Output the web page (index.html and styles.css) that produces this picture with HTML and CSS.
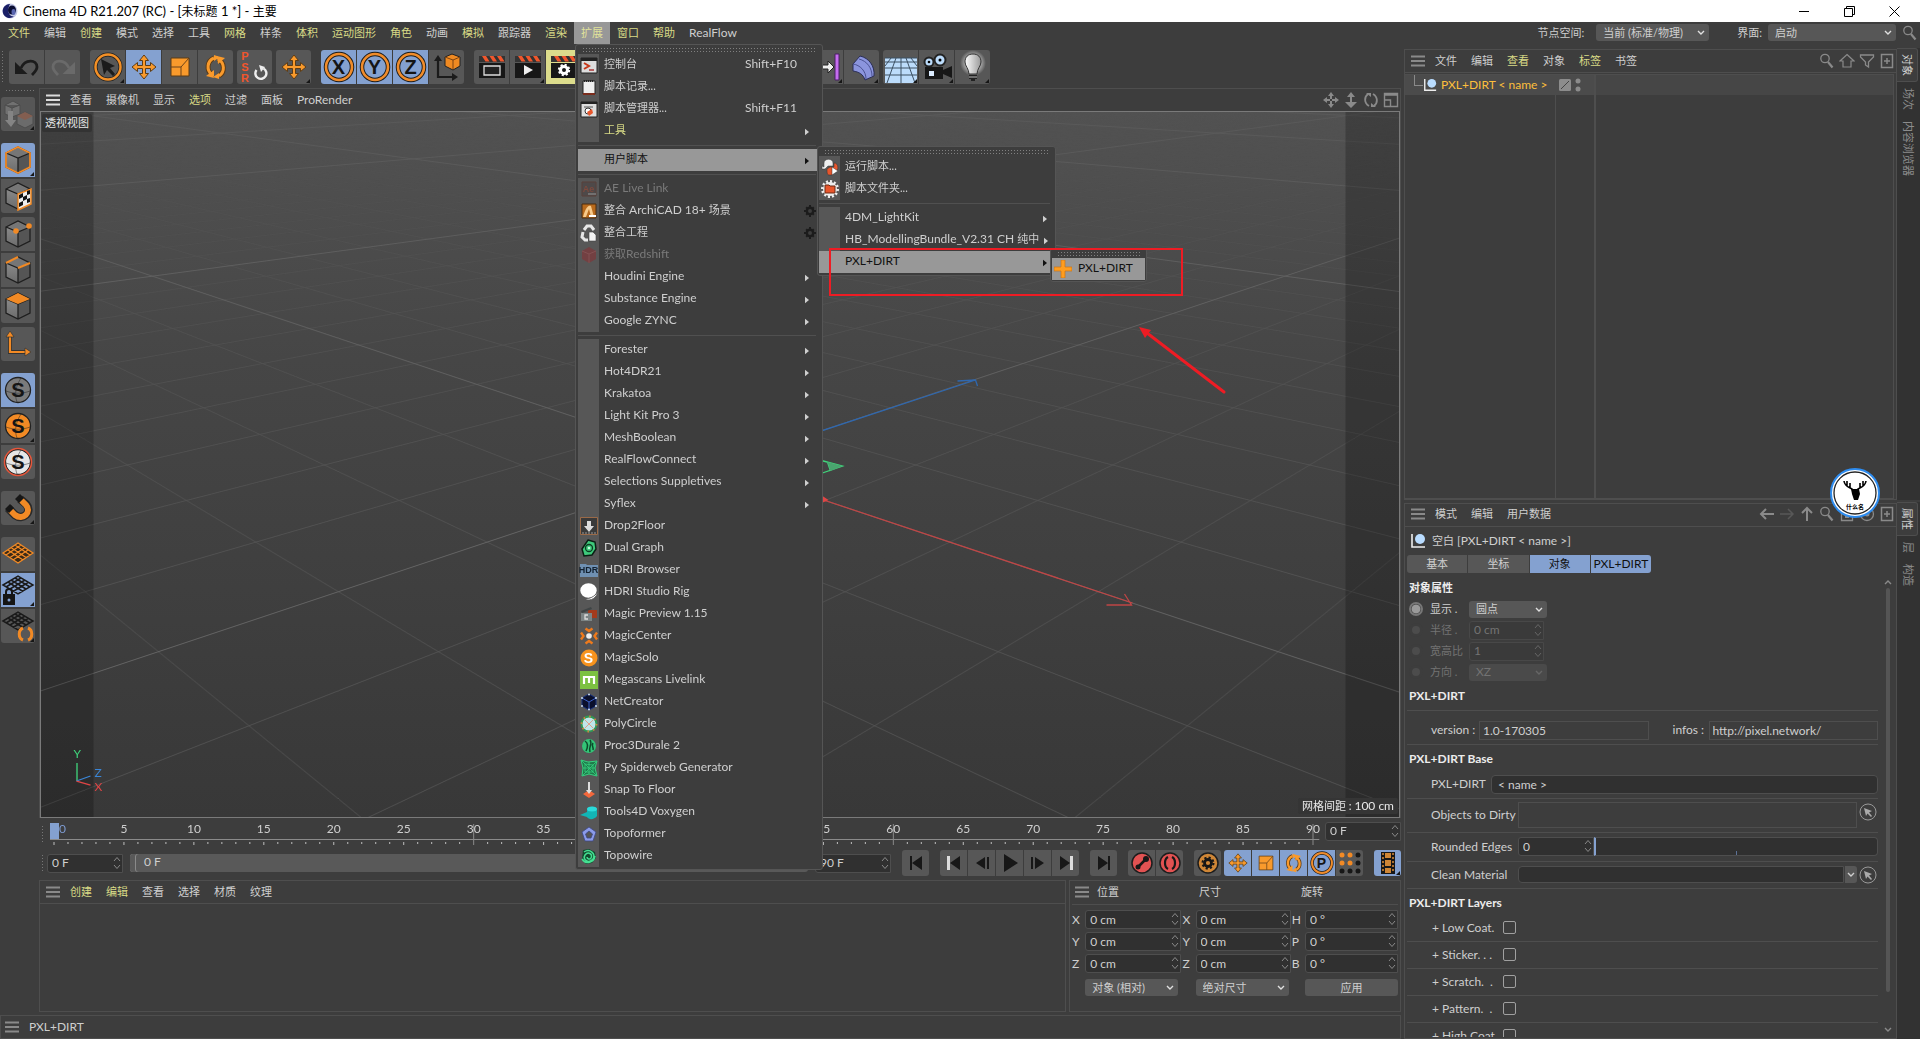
FILE: index.html
```html
<!DOCTYPE html>
<html lang="zh-CN">
<head>
<meta charset="utf-8">
<title>Cinema 4D R21.207 (RC) - [未标题 1 *] - 主要</title>
<link rel="stylesheet" href="styles.css">
</head>
<body>
<svg class="paints" aria-hidden="true">
  <defs>
    <linearGradient id="cubeL" x1="0" y1="0" x2="0" y2="1"><stop offset="0" stop-color="#8a8a8a"/><stop offset="1" stop-color="#6c6c6c"/></linearGradient>
    <radialGradient id="glow"><stop offset="0.5" stop-color="#fff" stop-opacity=".6"/><stop offset="1" stop-color="#fff" stop-opacity="0"/></radialGradient>
    <linearGradient id="bulb"><stop offset="0" stop-color="#fff"/><stop offset="1" stop-color="#999"/></linearGradient>
  </defs>
</svg>
<svg class="sprite" aria-hidden="true">
  <symbol id="logo" viewBox="0 0 16 16"><circle cx="8" cy="8" r="7.500" fill="#c3c8e6"/><path d="M8 1a7 7 0 1 0 4 12.500C6 14 5 6 8 1z" fill="#1a1f66"/><ellipse cx="10" cy="7" rx="4" ry="4.500" fill="#0b0e33"/><ellipse cx="11.500" cy="9" rx="2" ry="3" fill="#5a66b0"/></symbol>
  <symbol id="burger" viewBox="0 0 14 12"><path d="M0 1.500h14M0 6h14M0 10.500h14" stroke="currentColor" stroke-width="2"/></symbol>
  <symbol id="chev" viewBox="0 0 8 6"><path d="M1 1l3 3 3-3" fill="none" stroke="currentColor" stroke-width="1.400"/></symbol>
  <symbol id="spin" viewBox="0 0 8 14"><path d="M1 5l3-3.500L7 5M1 9l3 3.500L7 9" fill="none" stroke="currentColor"/></symbol>
  <symbol id="tri" viewBox="0 0 5 8"><path d="M0 0l5 4-5 4z" fill="currentColor"/></symbol>
  <symbol id="lens" viewBox="0 0 16 16"><circle cx="6" cy="5.500" r="4.200" fill="none" stroke="currentColor" stroke-width="1.300"/><path d="M9 9l4.500 5.500" stroke="currentColor" stroke-width="2.200"/></symbol>
  <symbol id="home" viewBox="0 0 16 16"><path d="M8 1.500L15 8h-3v6H4V8H1z" fill="none" stroke="currentColor" stroke-width="1.200"/></symbol>
  <symbol id="filter" viewBox="0 0 16 16"><path d="M1.500 2h13v2L9.500 9v5l-3-2V9l-5-5z" fill="none" stroke="currentColor" stroke-width="1.300"/></symbol>
  <symbol id="plusbox" viewBox="0 0 16 16"><path d="M2.500 1.500h11v13h-11zM8 5v6M5 8h6" fill="none" stroke="currentColor" stroke-width="1.500"/></symbol>
  <symbol id="lockbox" viewBox="0 0 16 16"><path d="M2.500 5.500h11v9h-11z" fill="none" stroke="currentColor" stroke-width="1.300"/><path d="M6 9h4v3H6z" fill="currentColor"/></symbol>
  <symbol id="target" viewBox="0 0 16 16"><circle cx="8" cy="8" r="6.500" fill="none" stroke="currentColor" stroke-width="1.300"/><circle cx="8" cy="8" r="2.500" fill="currentColor"/></symbol>
  <symbol id="aleft" viewBox="0 0 16 16"><path d="M15 8H2M7 3L2 8l5 5" fill="none" stroke="currentColor" stroke-width="2"/></symbol>
  <symbol id="aright" viewBox="0 0 16 16"><path d="M1 8h13M9 3l5 5-5 5" fill="none" stroke="currentColor" stroke-width="1.500"/></symbol>
  <symbol id="aup" viewBox="0 0 16 16"><path d="M8 15V2M3 7l5-5 5 5" fill="none" stroke="currentColor" stroke-width="2"/></symbol>
  <symbol id="undo" viewBox="0 0 34 34"><path d="M11 18C15 9 27 9 27 17c0 3-2 5-5 8" fill="none" stroke="currentColor" stroke-width="2.800"/><path d="M5 12v12h12.500z" fill="currentColor"/></symbol>
  <symbol id="select" viewBox="0 0 34 34"><circle cx="17" cy="17" r="12.500" fill="none" stroke="#222" stroke-width="4"/><circle cx="17" cy="17" r="12.500" fill="none" stroke="#f39027" stroke-width="2.500"/><path d="M10 9l14 7-5 2 5 6-2 2-6-6-3 5z" fill="#1b1b1b"/></symbol>
  <symbol id="move" viewBox="0 0 34 34"><path d="M17 5l4.500 5.500H18.500v5h5v-3l5.500 4.500-5.500 4.500v-3h-5v5h3L17 29l-4.500-5.500h3v-5h-5v3L5 17l5.500-4.500v3h5v-5h-3z" fill="#f99a2c" stroke="#5c3c17"/></symbol>
  <symbol id="scale" viewBox="0 0 34 34"><path d="M8 8h18v18H8z" fill="#f99a2c" stroke="#5c3c17"/><path d="M8 17h10v9M18 17l8-9" fill="none" stroke="#6b431a"/></symbol>
  <symbol id="rotate" viewBox="0 0 34 34"><path d="M13 25C7 20 8 11 15 8M19 9c7 4 7 13 1 17" fill="none" stroke="#5c3c17" stroke-width="5"/><path d="M13 25C7 20 8 11 15 8M19 9c7 4 7 13 1 17" fill="none" stroke="#f99a2c" stroke-width="3"/><path d="M15 5v6l6-4zM20 23v6l-6-2zM7 26l8 2V20zM26 8l-8-2 1 8z" fill="#f99a2c"/></symbol>
  <symbol id="psr" viewBox="0 0 34 34"><path d="M18.500 20a5.500 5.500 0 1 0 7-1.500" fill="none" stroke="#eee" stroke-width="2.400"/><path d="M21 15l6 2-4 5z" fill="#eee"/></symbol>
  <symbol id="ring" viewBox="0 0 34 34"><circle cx="17" cy="17" r="13" fill="none" stroke="#1d1d1d" stroke-width="4.500"/><circle cx="17" cy="17" r="13" fill="none" stroke="#f08c2b" stroke-width="2.600"/></symbol>
  <symbol id="world" viewBox="0 0 34 34"><path d="M8 10v17h16" fill="none" stroke="#1b1b1b" stroke-width="2.200"/><path d="M8 5l4 6H4zM28 27l-6 4v-8z" fill="#1b1b1b"/><path d="M15 7l7-3 8 3v9l-7 4-8-4z" fill="#f08a22" stroke="#222"/><path d="M15 7l8 3 7-3M23 10v9" fill="none" stroke="#7c4310"/></symbol>
  <symbol id="clap" viewBox="0 0 34 34"><path d="M4 13h26v15H4z" fill="#171717"/><path d="M4 6h26v6H4z" fill="#333"/><path d="M7 6l3.500 5.500h4L11 6zM14.500 6l3.500 5.500h4L18.500 6zM22 6l3.500 5.500h4L26 6z" fill="#f0562c"/></symbol>
  <symbol id="renderview" viewBox="0 0 34 34"><use href="#clap"/><path d="M9 16h16v9H9z" fill="#222" stroke="#ddd" stroke-width="1.300"/></symbol>
  <symbol id="renderpv" viewBox="0 0 34 34"><use href="#clap"/><path d="M13 15l9 5-9 5z" fill="#eee"/></symbol>
  <symbol id="renderset" viewBox="0 0 34 34"><use href="#clap"/><circle cx="17" cy="20" r="3.500" fill="none" stroke="#fff" stroke-width="3"/><circle cx="17" cy="20" r="5.200" fill="none" stroke="#fff" stroke-width="2" stroke-dasharray="2.100 1.980"/></symbol>
  <symbol id="inst" viewBox="0 0 34 34"><path d="M13 15h6v-4l6 6-6 6v-4h-6z" fill="#eee" stroke="#222"/><path d="M26 4h4v26h-4z" fill="#c66df0" stroke="#4b2165"/></symbol>
  <symbol id="bend" viewBox="0 0 34 34"><path d="M8 14l7-8c9 2 15 10 14 20l-9 4c-2-6-6-8-12-9z" fill="#8b95de" stroke="#2b2e55"/><path d="M8 14c7 1 13 7 13 15M14 9c8 2 13 9 13 17" fill="none" stroke="#4a5192"/></symbol>
  <symbol id="floor" viewBox="0 0 34 34"><path d="M1 8h32v25H1z" fill="#bcdcfb"/><path d="M1 8h32M1 12h32M1 18h32M1 25h32M17 8v25M12 8L3 33M22 8l9 25M7 8L1 16M27 8l6 8" fill="none" stroke="#3c5063"/></symbol>
  <symbol id="cam" viewBox="0 0 34 34"><path d="M5 17h18v3l9-4v12l-9-4v5H5z" fill="#171717"/><circle cx="9" cy="12" r="4.500" fill="#bcdcfb" stroke="#222" stroke-width="2"/><circle cx="20" cy="10" r="5.500" fill="#bcdcfb" stroke="#222" stroke-width="2"/><circle cx="9" cy="12" r="1.300"/><circle cx="20" cy="10" r="1.500"/><path d="M9 21h5v5H9z" fill="#dcecff"/></symbol>
  <symbol id="light" viewBox="0 0 34 34"><circle cx="17" cy="13" r="13" fill="url(#glow)"/><path d="M17 4c-5 0-8 3-8 8 0 4 4 7 4 12h8c0-5 4-8 4-12 0-5-3-8-8-8z" fill="url(#bulb)" stroke="#333"/><path d="M13 25h8v4h-8zM15 29h4v2h-4z" fill="#222"/><path d="M13 27h8" stroke="#bbb"/></symbol>
  <symbol id="cube" viewBox="0 0 34 34"><path d="M5 10l12 5v15L5 24z" fill="url(#cubeL)"/><path d="M17 15l12-5v14l-12 6z" fill="#555"/><path d="M5 10l12-6 12 6-12 5z" fill="#767676"/><path d="M5 10l12-6 12 6v14l-12 6-12-6zl12 5 12-5M17 15v15" fill="none" stroke="#1f1f1f" stroke-width="1.300"/></symbol>
  <symbol id="editable" viewBox="0 0 34 34"><g opacity=".55"><path d="M4 8l8-4 7 4v9l-8 3-7-3zl7 3 8-3M11 11v9" fill="#888" stroke="#444"/><path d="M16 19l8-4 8 4v8l-8 4-8-4z" fill="#7d7d7d" stroke="#444"/><path d="M16 19l8-4 8 4-8 4z" fill="#a8644c"/><path d="M7 14h5v9h3l-5 7-6-7h3z" fill="#aaa"/></g></symbol>
  <symbol id="model" viewBox="0 0 34 34"><use href="#cube"/><path d="M5 10l12-6 12 6v14l-12 6-12-6z" fill="none" stroke="#f28a25" stroke-width="1.800"/></symbol>
  <symbol id="texture" viewBox="0 0 34 34"><use href="#cube"/><path d="M17 15l13-5v15l-13 6z" fill="#eee" stroke="#f28a25" stroke-width="1.500"/><path d="M18 16l4-2v4l-4 2zM26 12l3-1v4l-3 1zM22 18l4-2v4l-4 2zM18 24l4-2v4l-4 2zM26 20l3-1v4l-3 1z" fill="#111"/></symbol>
  <symbol id="points" viewBox="0 0 34 34"><use href="#cube"/><circle cx="15" cy="14" r="2.800" fill="#f28a25"/><circle cx="28" cy="9" r="2.800" fill="#f28a25"/></symbol>
  <symbol id="edges" viewBox="0 0 34 34"><use href="#cube"/><path d="M5 10l12-6M17 15l12-5" stroke="#f28a25" stroke-width="2"/></symbol>
  <symbol id="polys" viewBox="0 0 34 34"><use href="#cube"/><path d="M5 10l12-6 12 6-12 5z" fill="#f28a25"/></symbol>
  <symbol id="axis" viewBox="0 0 34 34"><path d="M9 8v17h16" fill="none" stroke="#333" stroke-width="4"/><path d="M9 8v17h16" fill="none" stroke="#f28a25" stroke-width="2.200"/><path d="M9 4l4 6H5zM30 25l-6 4v-8z" fill="#f28a25" stroke="#333" stroke-width=".7"/></symbol>
  <symbol id="snapo" viewBox="0 0 34 34"><circle cx="17" cy="17" r="12.500" fill="currentColor" stroke="#222" stroke-width="1.300"/><path d="M5 18c8 3 16 3 24 0M20 5c-5 8-7 16-4 24" fill="none" stroke="#222" stroke-opacity=".6" stroke-width=".8"/></symbol>
  <symbol id="redring" viewBox="0 0 34 34"><use href="#snapo"/><circle cx="17" cy="17" r="13.500" fill="none" stroke="#e8563a" stroke-width="1.500"/></symbol>
  <symbol id="magnet" viewBox="0 0 34 34"><path d="M7 17l7 7c8 6 18-3 11-11l-6-5" fill="none" stroke="#2a2a2a" stroke-width="8.500"/><path d="M9 19l5 5c8 6 17-3 11-10l-5-5" fill="none" stroke="#f28a25" stroke-width="6"/><path d="M4 18l5-5 4 4-5 5zM14 8l5-5 4 4-5 5z" fill="#171717"/></symbol>
  <symbol id="mesh" viewBox="0 0 34 34"><path d="M2 16L17 6l15 10-15 10z" fill="#3a2a18"/><path d="M2 16L17 6l15 10-15 10zM5 18l15-10M9 20.500l15-10M12 23l15-10M29 18L14 8M25 20.500L10 10.500M22 23L7 13" fill="none" stroke="currentColor" stroke-width="1.300"/></symbol>
  <symbol id="wplock" viewBox="0 0 34 34"><path d="M2 12L17 3l15 9-15 9zM5 14l15-9M9 16l15-9M12 18.500l15-9M29 14L14 5M25 16L10 7M22 18.500L7 9" fill="none" stroke="#1a1a1a" stroke-width="1.500"/><path d="M2 21h12v11H2z" fill="#151515"/><path d="M5 21v-2a3 3 0 0 1 6 0v2" fill="none" stroke="#151515" stroke-width="2"/><circle cx="8" cy="27" r="1.500" fill="#84a1d0"/></symbol>
  <symbol id="wprot" viewBox="0 0 34 34"><path d="M2 12L17 3l15 9-15 9zM5 14l15-9M9 16l15-9M12 18.500l15-9M29 14L14 5M25 16L10 7M22 18.500L7 9" fill="none" stroke="#1a1a1a" stroke-width="1.500"/><path d="M22 19c-5 2-5 10 0 12M27 19c5 2 5 10 0 12" fill="none" stroke="#f28a25" stroke-width="3"/></symbol>
  <symbol id="nav1" viewBox="0 0 16 16"><path d="M8 0l3 4H5zM8 16l3-4H5zM0 8l4-3v6zM16 8l-4-3v6zM7 4h2v3H7zM7 9h2v3H7zM4 7h3v2H4zM9 7h3v2H9z" fill="currentColor"/></symbol>
  <symbol id="nav2" viewBox="0 0 16 16"><path d="M8 0l4 5H9v5h5l-6 6-6-6h5V5H4z" fill="currentColor"/></symbol>
  <symbol id="nav3" viewBox="0 0 16 16"><path d="M6 14C1 11 1 5 5 2M10 2c5 3 5 9 1 12" fill="none" stroke="currentColor" stroke-width="1.800"/><path d="M3 1h5v4zM13 15H8v-4z" fill="currentColor"/></symbol>
  <symbol id="nav4" viewBox="0 0 16 16"><path d="M1.500 1.500h13v13h-13zM1.500 3h13M1.500 8h6v6.500" fill="none" stroke="currentColor" stroke-width="1.400"/></symbol>
  <symbol id="null" viewBox="0 0 16 16"><path d="M2 1v13h13" fill="none" stroke="#eee" stroke-width="1.600"/><circle cx="10" cy="6" r="5" fill="#b9dcff"/></symbol>
  <symbol id="pick" viewBox="0 0 18 18"><circle cx="9" cy="9" r="8" fill="none" stroke="#999"/><path d="M5 5l8 3-3 1.500 3 3.500-1 1-3.500-3.500L7 13z" fill="#aaa"/></symbol>
  <symbol id="pstart" viewBox="0 0 26 26"><path d="M7 6h2v14H7zM19 6v14L9 13z" fill="#171717"/></symbol>
  <symbol id="pkeyb" viewBox="0 0 26 26"><path d="M6 6h3v14H6z" fill="#ddd"/><path d="M19 6v14L9 13z" fill="#171717"/></symbol>
  <symbol id="pback" viewBox="0 0 26 26"><path d="M16 7v12L7 13zM18 7h2v12h-2z" fill="#171717"/></symbol>
  <symbol id="pplay" viewBox="0 0 26 26"><path d="M7 4v18l14-9z" fill="#171717"/></symbol>
  <symbol id="keyrec" viewBox="0 0 26 26"><circle cx="13" cy="13" r="10" fill="#e25252" stroke="#1d1d1d" stroke-width="1.500"/><path d="M9 17l8-8" stroke="#171717" stroke-width="2.500"/><circle cx="9" cy="17" r="2.500" fill="#171717"/><circle cx="17" cy="9" r="3" fill="#171717"/></symbol>
  <symbol id="autorec" viewBox="0 0 26 26"><circle cx="13" cy="13" r="10" fill="#e25252" stroke="#1d1d1d" stroke-width="1.500"/><path d="M11 7c-4 2-4 10 0 12M15 7c4 2 4 10 0 12" fill="none" stroke="#171717" stroke-width="2.200"/></symbol>
  <symbol id="keygear" viewBox="0 0 26 26"><circle cx="13" cy="13" r="10" fill="#cf8636" stroke="#1d1d1d" stroke-width="1.500"/><circle cx="13" cy="13" r="3.500" fill="none" stroke="#171717" stroke-width="2.800"/><circle cx="13" cy="13" r="5.500" fill="none" stroke="#171717" stroke-width="2" stroke-dasharray="2.200 2.100"/></symbol>
  <symbol id="pla" viewBox="0 0 26 26"><g fill="#171717"><circle cx="5" cy="21" r="2.500"/><circle cx="13" cy="21" r="2.500"/><circle cx="21" cy="21" r="2.500"/><circle cx="21" cy="13" r="2.500"/><circle cx="21" cy="5" r="2.500"/></g><g fill="#f28a25"><circle cx="5" cy="5" r="2.500"/><circle cx="13" cy="5" r="2.500"/><circle cx="5" cy="13" r="2.500"/><circle cx="13" cy="13" r="2.500"/></g></symbol>
  <symbol id="film" viewBox="0 0 26 26"><path d="M6 2h14v22H6z" fill="#171717"/><path d="M10 3h6v5h-6zM10 10h6v6h-6zM10 18h6v5h-6z" fill="#cf8636"/><path d="M8 3v20M18 3v20" stroke="#cf8636" stroke-width="1.600" stroke-dasharray="2 2"/></symbol>
  <symbol id="gear" viewBox="0 0 12 12"><circle cx="6" cy="6" r="3.200" fill="none" stroke="#1c1c1c" stroke-width="2.400"/><path d="M5 0h2v2H5zM5 10h2v2H5zM0 5h2v2H0zM10 5h2v2h-2zM1.500 2.900l1.400-1.400 1.500 1.500L3 4.400zM7.600 3l1.500-1.500 1.400 1.400L9 4.400zM1.500 9.100L3 7.600l1.400 1.400-1.500 1.500zM7.600 9L9 7.600l1.500 1.500-1.400 1.400z" fill="#1c1c1c"/></symbol>
  <symbol id="m-console" viewBox="0 0 18 18"><path d="M1 2h16v15H1z" fill="#ddd" stroke="#222"/><path d="M1 2h16v3H1z" fill="#222"/><path d="M4 7l5 3-5 3" fill="none" stroke="#c8381a" stroke-width="2"/><path d="M9 14h5" stroke="#a33" stroke-width="1.500"/></symbol>
  <symbol id="m-log" viewBox="0 0 18 18"><path d="M3 3h12v13H3z" fill="#eee" stroke="#222"/><path d="M3 16h12" stroke="#7a2c1c" stroke-width="2"/><path d="M4 3h10" stroke="#222" stroke-width="2" stroke-dasharray="1 1"/></symbol>
  <symbol id="m-mgr" viewBox="0 0 18 18"><path d="M1 2h16v15H1z" fill="#ddd" stroke="#222"/><path d="M1 2h16v2H1z" fill="#222"/><path d="M4 7h9" stroke="#555"/><circle cx="8" cy="11" r="3" fill="#fff" stroke="#333"/><path d="M7 12l5-3 1 4-4 3z" fill="#e8562c"/></symbol>
  <symbol id="m-ae" viewBox="0 0 18 18"><path d="M2 2h14v14H2z" fill="#4c4646" stroke="#5b3a33"/><path d="M8 14h8" stroke="#888" stroke-width="1.500"/></symbol>
  <symbol id="m-archi" viewBox="0 0 18 18"><path d="M2 2h14v14H2z" fill="#b86a1c" stroke="#4a2c10"/><path d="M3 15C6 4 9 3 11 4l3 11h-3L9 7 6 15z" fill="#f6c98a"/><path d="M9 14h7" stroke="#fff" stroke-width="2"/></symbol>
  <symbol id="m-pack" viewBox="0 0 18 18"><path d="M4 6l3-4h4l3 4M3 8l-1 5 3 3h3" fill="none" stroke="#e6e6e6" stroke-width="3"/><path d="M9 8h4l3 3v6H9z" fill="#f4f4f4" stroke="#444" stroke-width=".6"/></symbol>
  <symbol id="m-red" viewBox="0 0 18 18"><path d="M2 5l7-4 7 4v8l-7 4-7-4z" fill="#7a3b3d"/><path d="M2 5l7 3 7-3M9 8v9" stroke="#8f5052" fill="none"/></symbol>
  <symbol id="m-drop" viewBox="0 0 18 18"><path d="M.5.500h17v17H.5z" fill="#3a3a3a" stroke="#9a6a48"/><path d="M7 4h4v5h3l-5 6-5-6h3z" fill="#ddd"/><path d="M2 16h14" stroke="#999" stroke-dasharray="2 1"/></symbol>
  <symbol id="m-dual" viewBox="0 0 18 18"><path d="M8 1l7 2 1 7-4 6-8 1-2-7z" fill="#3ec97b" stroke="#0b1f14" stroke-width="1.500"/><circle cx="9" cy="9" r="3.500" fill="none" stroke="#0b3d22" stroke-width="1.300"/><circle cx="9" cy="9" r="1.300" fill="#bfffd9"/></symbol>
  <symbol id="m-hdr" viewBox="0 0 18 18"><path d="M0 3h6l1 1h11v12H0z" fill="#6f90b2"/></symbol>
  <symbol id="m-rig" viewBox="0 0 18 18"><ellipse cx="8.500" cy="7.500" rx="8.200" ry="7.300" fill="#fff"/><path d="M5 16.500c6 2 12-2 12.500-7.500-3 5-8 6.500-12.500 7.500z" fill="#fff" stroke="#555" stroke-width=".8"/></symbol>
  <symbol id="m-prev" viewBox="0 0 18 18"><path d="M8 5h9v8H8z" fill="#a33a1c"/><path d="M1 8h11v8H1z" fill="#7d8586"/><path d="M1 6l10-4 1 2L2 8z" fill="#3f4445"/><path d="M8 10H5v4h3" stroke="#ddd" fill="none" stroke-width="1.300"/></symbol>
  <symbol id="m-center" viewBox="0 0 18 18"><circle cx="9" cy="9" r="2.800" fill="#eee"/><path d="M5.500 1.500L9 4l3.500-2.500M5.500 16.500L9 14l3.500 2.500M1 5.500L3.500 9 1 12.500M17 5.500L14.500 9l2.500 3.500" fill="none" stroke="#ee7a1c" stroke-width="2.400"/></symbol>
  <symbol id="m-solo" viewBox="0 0 18 18"><circle cx="9" cy="9" r="8.500" fill="#f7931e"/></symbol>
  <symbol id="m-mega" viewBox="0 0 18 18"><path d="M0 0h18v18H0z" fill="#7cc142"/><path d="M4 13V6h10v7M9 6v6" fill="none" stroke="#fff" stroke-width="2.200"/></symbol>
  <symbol id="m-net" viewBox="0 0 18 18"><path d="M9 1l7 4v8l-7 4-7-4V5z" fill="#0a0f2b" stroke="#16307c"/><path d="M2 5l7 4 7-4M9 9v8" stroke="#3d62cc" fill="none"/><g fill="#cde"><circle cx="9" cy="1.500" r="1"/><circle cx="16" cy="5" r="1"/><circle cx="16" cy="13" r="1"/><circle cx="2" cy="5" r="1"/><circle cx="2" cy="13" r="1"/><circle cx="9" cy="16.500" r="1"/></g></symbol>
  <symbol id="m-poly" viewBox="0 0 18 18"><circle cx="9" cy="9" r="7" fill="#bfe6ea"/><circle cx="9" cy="9" r="7.500" fill="none" stroke="#2f9a54" stroke-width="1.800"/><circle cx="9" cy="9" r="7.500" fill="none" stroke="#d8803c" stroke-width="1.800" stroke-dasharray="1.500 4.390"/><path d="M5 5l8 8M13 5l-8 8" stroke="#e0a08c"/></symbol>
  <symbol id="m-proc" viewBox="0 0 18 18"><circle cx="9" cy="9" r="7" fill="#33c477"/><path d="M5 4c3 2 3 6 1 10M10 3c3 4-2 7 0 12M13 6c-2 3 1 4 0 7" stroke="#0c4a2a" stroke-width="1.500" fill="none"/></symbol>
  <symbol id="m-web" viewBox="0 0 18 18"><path d="M1 1l7 2 9-1-2 7 2 8-8-2-7 2 1-8z" fill="#1f7a4b" stroke="#35d07f"/><path d="M2 2l14 14M16 3L3 16M9 3v12M3 9h12M5 5l8 1 0 7-8 0z" stroke="#35d07f" fill="none" stroke-width=".8"/></symbol>
  <symbol id="m-snap" viewBox="0 0 18 18"><path d="M3 13l6-4 6 4-6 4z" fill="#f4683c"/><path d="M8 1h2v8h2l-3 4-3-4h2z" fill="#ddd"/></symbol>
  <symbol id="m-vox" viewBox="0 0 18 18"><path d="M0 12l7-3V6c3-3 8-3 10 0v7c-3 4-8 4-10 1z" fill="#12b5b5"/><ellipse cx="12" cy="6" rx="5" ry="2.500" fill="#2bdada"/></symbol>
  <symbol id="m-form" viewBox="0 0 18 18"><path d="M9 2l7 5-3 9H5L2 7z" fill="#8b9be8" stroke="#3d4884" stroke-width=".8"/><path d="M9 6l3.500 3-1.500 4H7L5.500 9z" fill="#555" stroke="#3d4884" stroke-width=".8"/></symbol>
  <symbol id="m-wire" viewBox="0 0 18 18"><path d="M3 3l6-1 6 3 1 6-4 5-6 1-4-5z" fill="#124a2d"/><path d="M4 5c6-4 12 2 9 7-4 5-11 1-8-4 3-4 8-1 6 3-1 2-4 1-4-1M2 12c4 6 12 4 13-3" stroke="#44e092" stroke-width="1.500" fill="none"/></symbol>
  <symbol id="m-run" viewBox="0 0 18 18"><path d="M3 9V5c0-5 9-5 9 0v3H7l-3 3H1V8z" fill="#eee" stroke="#333" stroke-width=".5"/><path d="M6 11l3-2h4V5c5 0 5 8 1 9l-3 3H8c-2 0-2-3-2-6z" fill="#e8562c" stroke="#333" stroke-width=".5"/><path d="M11 9l6 4-6 4z" fill="#fff" stroke="#333" stroke-width=".5"/></symbol>
  <symbol id="m-folder" viewBox="0 0 18 18"><circle cx="9" cy="9" r="7" fill="#eee"/><circle cx="9" cy="9" r="7.500" fill="none" stroke="#eee" stroke-width="3" stroke-dasharray="2 1.900"/><path d="M4 5h4l1 1h5v7H4z" fill="#e8562c" stroke="#6a2a14"/></symbol>
  <symbol id="m-plus" viewBox="0 0 18 18"><path d="M7 0h4v7h7v4h-7v7H7v-7H0V7h7z" fill="#ff9d1e" stroke="#c87414" stroke-width=".7"/></symbol>
</svg>

<header class="titlebar">
  <svg class="i16"><use href="#logo"/></svg>
  <span class="title">Cinema 4D R21.207 (RC) - [<span class="t12">未标题</span> 1 *] - <span class="t12">主要</span></span>
  <span class="winbtns">
    <button aria-label="最小化"><svg class="i11" viewBox="0 0 11 11"><path d="M0 5.500h10" stroke="#000"/></svg></button>
    <button aria-label="还原"><svg class="i11" viewBox="0 0 11 11"><path d="M.5 2.500h8v8h-8zM2.500 2.500v-2h8v8h-2" fill="none" stroke="#000"/></svg></button>
    <button aria-label="关闭"><svg class="i11" viewBox="0 0 11 11"><path d="M.5.500l10 10M10.500.500l-10 10" stroke="#000"/></svg></button>
  </span>
</header>

<nav class="menubar">
  <button class="y">文件</button><button>编辑</button><button class="y">创建</button><button>模式</button><button>选择</button><button>工具</button><button class="y">网格</button><button>样条</button><button class="y">体积</button><button class="y">运动图形</button><button class="y">角色</button><button>动画</button><button class="y">模拟</button><button>跟踪器</button><button class="y">渲染</button><button class="y open">扩展</button><button class="y">窗口</button><button class="y">帮助</button><button class="lat">RealFlow</button>
  <span class="layouts">
    <label for="space">节点空间:</label>
    <span class="sel w113"><select id="space"><option>当前 (标准/物理)</option></select><svg><use href="#chev"/></svg></span>
    <label for="layout" class="gapl">界面:</label>
    <span class="sel w128"><select id="layout"><option>启动</option></select><svg><use href="#chev"/></svg></span>
    <svg class="i16 dim"><use href="#lens"/></svg>
  </span>
</nav>

<main class="app">
<div class="left">
  <div class="toolbar">
    <i class="vgrip"></i>
    <div class="grp"><button aria-label="撤销" class="ink"><svg><use href="#undo"/></svg></button><button aria-label="重做" class="ghost"><svg class="flip"><use href="#undo"/></svg></button></div>
    <div class="grp g10"><button aria-label="选择" class="more"><svg><use href="#select"/></svg></button><button aria-label="移动" class="on"><svg><use href="#move"/></svg></button><button aria-label="缩放"><svg><use href="#scale"/></svg></button><button aria-label="旋转"><svg><use href="#rotate"/></svg></button></div>
    <div class="grp g4"><button class="psrb"><svg><use href="#psr"/></svg><span><b>P</b><b>S</b><b>R</b></span></button></div>
    <div class="grp g4"><button aria-label="移动工具" class="more"><svg><use href="#move"/></svg></button></div>
    <div class="grp g10"><button class="on axisb"><svg><use href="#ring"/></svg><b>X</b></button><button class="on axisb"><svg><use href="#ring"/></svg><b>Y</b></button><button class="on axisb"><svg><use href="#ring"/></svg><b>Z</b></button><button aria-label="坐标系统"><svg><use href="#world"/></svg></button></div>
    <div class="grp g10"><button aria-label="渲染活动视图"><svg><use href="#renderview"/></svg></button><button aria-label="渲染到图片查看器" class="more"><svg><use href="#renderpv"/></svg></button><button aria-label="编辑渲染设置" class="hot"><svg><use href="#renderset"/></svg></button></div>
    <div class="grp gbig"><button aria-label="实例" class="more"><svg><use href="#inst"/></svg></button><button aria-label="弯曲" class="more"><svg><use href="#bend"/></svg></button></div>
    <div class="grp g4"><button aria-label="地面" class="more"><svg><use href="#floor"/></svg></button><button aria-label="摄像机" class="more"><svg><use href="#cam"/></svg></button><button aria-label="灯光" class="more"><svg><use href="#light"/></svg></button></div>
  </div>
  <div class="work">
    <aside class="tools">
      <i class="hgrip"></i>
      <div class="col"><button aria-label="转为可编辑" class="more"><svg><use href="#editable"/></svg></button></div>
      <div class="col c12"><button aria-label="模型" class="on more"><svg><use href="#model"/></svg></button><button aria-label="纹理"><svg><use href="#texture"/></svg></button></div>
      <div class="col c4"><button aria-label="点"><svg><use href="#points"/></svg></button><button aria-label="边"><svg><use href="#edges"/></svg></button><button aria-label="多边形"><svg><use href="#polys"/></svg></button></div>
      <div class="col c4"><button aria-label="启用轴心"><svg><use href="#axis"/></svg></button></div>
      <div class="col c12"><button class="on s1 axisb"><svg><use href="#snapo"/></svg><b>S</b></button><button class="s2 more axisb"><svg><use href="#snapo"/></svg><b>S</b></button><button class="s3 axisb"><svg><use href="#redring"/></svg><b>S</b></button></div>
      <div class="col c12"><button aria-label="捕捉" class="more"><svg><use href="#magnet"/></svg></button></div>
      <div class="col c12"><button aria-label="工作平面" class="s2"><svg><use href="#mesh"/></svg></button><button aria-label="锁定工作平面" class="on more"><svg><use href="#wplock"/></svg></button><button aria-label="旋转工作平面" class="more"><svg><use href="#wprot"/></svg></button></div>
    </aside>
    <div class="center">
      <section class="view">
        <div class="phead vhead"><svg class="burger lit"><use href="#burger"/></svg><button>查看</button><button>摄像机</button><button>显示</button><button class="y">选项</button><button>过滤</button><button>面板</button><button class="lat">ProRender</button>
          <span class="icons"><svg class="i16"><use href="#nav1"/></svg><svg class="i16"><use href="#nav2"/></svg><svg class="i16"><use href="#nav3"/></svg><svg class="i16"><use href="#nav4"/></svg></span></div>
        <div class="canvas">
          <svg id="scene" viewBox="41 112 1359 705" preserveAspectRatio="xMidYMid slice">
            <defs><linearGradient id="fade" x1="0" y1="112" x2="0" y2="817" gradientUnits="userSpaceOnUse"><stop offset="0" stop-color="#666"/><stop offset=".25" stop-color="#ddd"/><stop offset=".6" stop-color="#fff"/></linearGradient><mask id="far"><path d="M41 112h1359v705H41z" fill="url(#fade)"/></mask></defs>
            <g mask="url(#far)"><g id="minor"></g><g id="major"></g></g>
            <g fill="none" stroke-width="1.300">
              <path d="M719 465l257-85M958 381l18-1 2 6" stroke="#2f68b0"/>
              <path d="M719 465l414 138M1107 605h25l-7-11" stroke="#c04545"/>
              <path d="M820 494l9 6-9 4z" fill="#e04545"/>
              <path d="M820 460l23 6-23 8M828 462l3 9" stroke="#3fd67c"/>
              <path d="M828 462l15 4-12 5z" fill="#4aa56f"/>
            </g>
            <path d="M41 112h53v705H41zM1346 112h54v705h-54z" fill="#000" opacity=".22"/>
            <g fill="none" stroke-width="1.300"><path d="M77.500 781v-18" stroke="#3fd67c"/><path d="M77 781l14-5" stroke="#3a86d8"/><path d="M77 781l14 4" stroke="#e04545"/></g>
            <g font-family="Lato, sans-serif" font-size="12"><text x="74" y="758" fill="#3fd67c">Y</text><text x="95" y="777" fill="#3a86d8">Z</text><text x="95" y="791" fill="#e04545">X</text></g>
          </svg>
          <span class="vlabel">透视视图</span>
          <span class="vgrid">网格间距 : <span class="lat">100 cm</span></span>
        </div>
      </section>

      <div class="timeline">
        <i class="vgrip small"></i>
        <div class="ruler"><i class="head"></i><svg id="ticks"></svg><div class="nums" id="nums"></div></div>
        <span class="num w76"><input aria-label="当前帧" value="0 F"><svg><use href="#spin"/></svg></span>
      </div>
      <div class="transport">
        <i class="vgrip small"></i>
        <span class="num w76"><input aria-label="起始帧" value="0 F"><svg><use href="#spin"/></svg></span>
        <div class="range">0 F</div>
        <span class="num w76"><input aria-label="结束帧" value="90 F"><svg><use href="#spin"/></svg></span>
        <div class="pg first"><button aria-label="转到开始"><svg><use href="#pstart"/></svg></button></div>
        <div class="pg p12"><button aria-label="上一关键帧"><svg><use href="#pkeyb"/></svg></button><button aria-label="上一帧"><svg><use href="#pback"/></svg></button><button aria-label="播放"><svg><use href="#pplay"/></svg></button><button aria-label="下一帧"><svg class="flip"><use href="#pback"/></svg></button><button aria-label="下一关键帧"><svg class="flip"><use href="#pkeyb"/></svg></button></div>
        <div class="pg p12"><button aria-label="转到结束"><svg class="flip"><use href="#pstart"/></svg></button></div>
        <div class="pg p12"><button aria-label="记录"><svg><use href="#keyrec"/></svg></button><button aria-label="自动关键帧"><svg><use href="#autorec"/></svg></button></div>
        <div class="pg p12"><button aria-label="关键帧选集"><svg><use href="#keygear"/></svg></button></div>
        <div class="pg p4"><button aria-label="位置" class="on"><svg><use href="#move"/></svg></button><button aria-label="缩放" class="on"><svg><use href="#scale"/></svg></button><button aria-label="旋转" class="on"><svg><use href="#rotate"/></svg></button><button class="on axisb"><svg><use href="#ring"/></svg><b>P</b></button><button aria-label="PLA"><svg><use href="#pla"/></svg></button></div>
        <div class="pg p12"><button aria-label="时间线" class="on more"><svg><use href="#film"/></svg></button></div>
      </div>

      <div class="bottom">
        <section class="materials">
          <div class="phead"><svg class="burger"><use href="#burger"/></svg><button class="y">创建</button><button class="y">编辑</button><button>查看</button><button>选择</button><button>材质</button><button>纹理</button></div>
        </section>
        <section class="coords">
          <div class="chead"><svg class="burger"><use href="#burger"/></svg><span>位置</span><span>尺寸</span><span>旋转</span></div>
          <div class="cgrid">
            <label for="px">X</label><span class="num"><input id="px" value="0 cm"><svg><use href="#spin"/></svg></span><label for="sx">X</label><span class="num"><input id="sx" value="0 cm"><svg><use href="#spin"/></svg></span><label for="rh">H</label><span class="num"><input id="rh" value="0 °"><svg><use href="#spin"/></svg></span>
            <label for="py">Y</label><span class="num"><input id="py" value="0 cm"><svg><use href="#spin"/></svg></span><label for="sy">Y</label><span class="num"><input id="sy" value="0 cm"><svg><use href="#spin"/></svg></span><label for="rp">P</label><span class="num"><input id="rp" value="0 °"><svg><use href="#spin"/></svg></span>
            <label for="pz">Z</label><span class="num"><input id="pz" value="0 cm"><svg><use href="#spin"/></svg></span><label for="sz">Z</label><span class="num"><input id="sz" value="0 cm"><svg><use href="#spin"/></svg></span><label for="rb">B</label><span class="num"><input id="rb" value="0 °"><svg><use href="#spin"/></svg></span>
            <i></i><span class="sel"><select aria-label="位置模式"><option>对象 (相对)</option></select><svg><use href="#chev"/></svg></span><i></i><span class="sel"><select aria-label="尺寸模式"><option>绝对尺寸</option></select><svg><use href="#chev"/></svg></span><i></i><button class="apply">应用</button>
          </div>
        </section>
      </div>
    </div>
  </div>
  <footer class="status"><svg class="burger"><use href="#burger"/></svg><span>PXL+DIRT</span></footer>
</div>

<div class="right">
  <div class="dock objects">
    <section class="panel">
      <div class="phead"><svg class="burger"><use href="#burger"/></svg><button>文件</button><button>编辑</button><button class="y">查看</button><button>对象</button><button class="y">标签</button><button>书签</button>
        <span class="icons"><svg class="i16"><use href="#lens"/></svg><svg class="i16"><use href="#home"/></svg><svg class="i16"><use href="#filter"/></svg><svg class="i16"><use href="#plusbox"/></svg></span></div>
      <div class="tree">
        <div class="tcol names"><div class="trow"><i class="branch"></i><svg class="i14"><use href="#null"/></svg><span>PXL+DIRT &lt; name &gt;</span></div></div>
        <div class="tcol flags"><div class="trow"><svg class="i26" viewBox="0 0 26 14"><rect x="1" y="1" width="12" height="12" rx="1.500" fill="#8c8c8c"/><path d="M3 11l8-8" stroke="#444"/><circle cx="20" cy="3" r="2.500" fill="#8c8c8c"/><circle cx="20" cy="11" r="2.500" fill="#8c8c8c"/></svg></div></div>
        <div class="tcol tags"><div class="trow"></div></div>
      </div>
    </section>
    <div class="tabs"><button class="act">对象</button><button>场次</button><button>内容浏览器</button></div>
  </div>
  <div class="dock attrs">
    <section class="panel">
      <div class="phead"><svg class="burger"><use href="#burger"/></svg><button>模式</button><button>编辑</button><button>用户数据</button>
        <span class="icons"><svg class="i16"><use href="#aleft"/></svg><svg class="i16 faint"><use href="#aright"/></svg><svg class="i16"><use href="#aup"/></svg><svg class="i16"><use href="#lens"/></svg><svg class="i16"><use href="#lockbox"/></svg><svg class="i16"><use href="#target"/></svg><svg class="i16"><use href="#plusbox"/></svg></span></div>
      <div class="aname"><svg class="i16"><use href="#null"/></svg><span><span class="zh">空白</span> [PXL+DIRT &lt; name &gt;]</span></div>
      <div class="atabs"><button>基本</button><button>坐标</button><button class="on">对象</button><button class="on lat">PXL+DIRT</button></div>
      <div class="ascroll">
        <form class="aform">
          <h2 class="zh">对象属性</h2>
          <div class="prop"><input type="radio" id="k1" checked aria-label="显示关键帧"><label for="disp">显示 .</label><span class="sel w78"><select id="disp"><option>圆点</option></select><svg><use href="#chev"/></svg></span></div>
          <div class="prop off"><input type="radio" disabled aria-label="半径关键帧"><label for="rad">半径 .</label><span class="num w75"><input id="rad" value="0 cm" disabled><svg><use href="#spin"/></svg></span></div>
          <div class="prop off"><input type="radio" disabled aria-label="宽高比关键帧"><label for="asp">宽高比</label><span class="num w75"><input id="asp" value="1" disabled><svg><use href="#spin"/></svg></span></div>
          <div class="prop off"><input type="radio" disabled aria-label="方向关键帧"><label for="ori">方向 .</label><span class="sel w78"><select id="ori" class="lat" disabled><option>XZ</option></select><svg><use href="#chev"/></svg></span></div>
          <h2>PXL+DIRT</h2>
          <div class="row info"><label for="ver">version :</label><input class="flat" id="ver" value="1.0-170305"><label for="inf">infos :</label><input class="flat" id="inf" value="http://pixel.network/"></div>
          <h2 class="base">PXL+DIRT Base</h2>
          <div class="row r28"><label for="nm" class="l62">PXL+DIRT</label><input class="deep" id="nm" value="&lt; name &gt;"></div>
          <div class="row r34"><label for="obj" class="l88">Objects to Dirty</label><input class="flat tall" id="obj"><button type="button" class="pick" aria-label="拾取对象"><svg><use href="#pick"/></svg></button></div>
          <div class="row r29"><label for="rnd" class="l88">Rounded Edges</label><span class="num slid"><input id="rnd" value="0"><svg><use href="#spin"/></svg></span><i class="track"></i></div>
          <div class="row r27"><label for="mat" class="l88">Clean Material</label><span class="link"><input class="deep" id="mat"><button type="button" aria-label="选择材质"><svg><use href="#chev"/></svg></button></span><button type="button" class="pick" aria-label="拾取材质"><svg><use href="#pick"/></svg></button></div>
          <h2 class="lay">PXL+DIRT Layers</h2>
          <div class="row lr"><label for="c1">+ Low Coat.</label><input type="checkbox" id="c1"></div>
          <div class="row lr"><label for="c2">+ Sticker. . .</label><input type="checkbox" id="c2"></div>
          <div class="row lr"><label for="c3">+ Scratch. &nbsp;.</label><input type="checkbox" id="c3"></div>
          <div class="row lr"><label for="c4">+ Pattern. &nbsp;.</label><input type="checkbox" id="c4"></div>
          <div class="row lr"><label for="c5">+ High Coat</label><input type="checkbox" id="c5"></div>
        </form>
        <div class="sbar"><svg class="up"><use href="#chev"/></svg><i></i><svg><use href="#chev"/></svg></div>
      </div>
    </section>
    <div class="tabs"><button class="act">属性</button><button>层</button><button>构造</button></div>
  </div>
</div>
</main>

<div class="menu m1">
  <i class="dots"></i>
  <div class="mi"><span class="ic"><svg><use href="#m-console"/></svg></span><span class="zh">控制台</span><kbd>Shift+F10</kbd></div>
  <div class="mi"><span class="ic"><svg><use href="#m-log"/></svg></span><span class="zh">脚本记录...</span></div>
  <div class="mi"><span class="ic"><svg><use href="#m-mgr"/></svg></span><span class="zh">脚本管理器...</span><kbd>Shift+F11</kbd></div>
  <div class="mi sub"><span class="ic"></span><span class="zh y">工具</span><svg class="ar"><use href="#tri"/></svg></div>
  <hr>
  <div class="mi sub sel-on"><span class="ic"></span><span class="zh">用户脚本</span><svg class="ar"><use href="#tri"/></svg></div>
  <hr>
  <div class="mi dis"><span class="ic ae"><svg><use href="#m-ae"/></svg><b>Ae</b></span><span>AE Live Link</span></div>
  <div class="mi"><span class="ic"><svg><use href="#m-archi"/></svg></span><span><span class="zh">整合</span> ArchiCAD 18+ <span class="zh">场景</span></span><svg class="gr"><use href="#gear"/></svg></div>
  <div class="mi"><span class="ic"><svg><use href="#m-pack"/></svg></span><span class="zh">整合工程</span><svg class="gr"><use href="#gear"/></svg></div>
  <div class="mi dis"><span class="ic"><svg><use href="#m-red"/></svg></span><span><span class="zh">获取</span>Redshift</span></div>
  <div class="mi"><span class="ic"></span><span>Houdini Engine</span><svg class="ar"><use href="#tri"/></svg></div>
  <div class="mi"><span class="ic"></span><span>Substance Engine</span><svg class="ar"><use href="#tri"/></svg></div>
  <div class="mi"><span class="ic"></span><span>Google ZYNC</span><svg class="ar"><use href="#tri"/></svg></div>
  <hr>
  <div class="mi"><span class="ic"></span><span>Forester</span><svg class="ar"><use href="#tri"/></svg></div>
  <div class="mi"><span class="ic"></span><span>Hot4DR21</span><svg class="ar"><use href="#tri"/></svg></div>
  <div class="mi"><span class="ic"></span><span>Krakatoa</span><svg class="ar"><use href="#tri"/></svg></div>
  <div class="mi"><span class="ic"></span><span>Light Kit Pro 3</span><svg class="ar"><use href="#tri"/></svg></div>
  <div class="mi"><span class="ic"></span><span>MeshBoolean</span><svg class="ar"><use href="#tri"/></svg></div>
  <div class="mi"><span class="ic"></span><span>RealFlowConnect</span><svg class="ar"><use href="#tri"/></svg></div>
  <div class="mi"><span class="ic"></span><span>Selections Suppletives</span><svg class="ar"><use href="#tri"/></svg></div>
  <div class="mi"><span class="ic"></span><span>Syflex</span><svg class="ar"><use href="#tri"/></svg></div>
  <div class="mi"><span class="ic"><svg><use href="#m-drop"/></svg></span><span>Drop2Floor</span></div>
  <div class="mi"><span class="ic"><svg><use href="#m-dual"/></svg></span><span>Dual Graph</span></div>
  <div class="mi"><span class="ic hdr"><svg><use href="#m-hdr"/></svg><b>HDR</b></span><span>HDRI Browser</span></div>
  <div class="mi"><span class="ic"><svg><use href="#m-rig"/></svg></span><span>HDRI Studio Rig</span></div>
  <div class="mi"><span class="ic"><svg><use href="#m-prev"/></svg></span><span>Magic Preview 1.15</span></div>
  <div class="mi"><span class="ic"><svg><use href="#m-center"/></svg></span><span>MagicCenter</span></div>
  <div class="mi"><span class="ic solo"><svg><use href="#m-solo"/></svg><b>S</b></span><span>MagicSolo</span></div>
  <div class="mi"><span class="ic"><svg><use href="#m-mega"/></svg></span><span>Megascans Livelink</span></div>
  <div class="mi"><span class="ic"><svg><use href="#m-net"/></svg></span><span>NetCreator</span></div>
  <div class="mi"><span class="ic"><svg><use href="#m-poly"/></svg></span><span>PolyCircle</span></div>
  <div class="mi"><span class="ic"><svg><use href="#m-proc"/></svg></span><span>Proc3Durale 2</span></div>
  <div class="mi"><span class="ic"><svg><use href="#m-web"/></svg></span><span>Py Spiderweb Generator</span></div>
  <div class="mi"><span class="ic"><svg><use href="#m-snap"/></svg></span><span>Snap To Floor</span></div>
  <div class="mi"><span class="ic"><svg><use href="#m-vox"/></svg></span><span>Tools4D Voxygen</span></div>
  <div class="mi"><span class="ic"><svg><use href="#m-form"/></svg></span><span>Topoformer</span></div>
  <div class="mi"><span class="ic"><svg><use href="#m-wire"/></svg></span><span>Topowire</span></div>
</div>
<div class="menu m2">
  <i class="dots"></i>
  <div class="mi"><span class="ic"><svg><use href="#m-run"/></svg></span><span class="zh">运行脚本...</span></div>
  <div class="mi"><span class="ic"><svg><use href="#m-folder"/></svg></span><span class="zh">脚本文件夹...</span></div>
  <hr>
  <div class="mi"><span class="ic"></span><span>4DM_LightKit</span><svg class="ar"><use href="#tri"/></svg></div>
  <div class="mi"><span class="ic"></span><span>HB_ModellingBundle_V2.31 CH <span class="zh">纯中</span></span><svg class="ar"><use href="#tri"/></svg></div>
  <div class="mi sel-on"><span class="ic"></span><span>PXL+DIRT</span><svg class="ar"><use href="#tri"/></svg></div>
</div>
<div class="menu m3">
  <i class="dots"></i>
  <div class="mi sel-on"><span class="ic"><svg><use href="#m-plus"/></svg></span><span>PXL+DIRT</span></div>
</div>
<div class="frame"></div>
<svg class="pointer" viewBox="0 0 90 70"><path d="M85 65L8 6" stroke="#ee1c24" stroke-width="3" stroke-linecap="round"/><path d="M0 0l12 3-6 8z" fill="#ee1c24"/></svg>
<svg class="badge" viewBox="0 0 50 50"><circle cx="25" cy="25" r="24" fill="#fff" stroke="#2d8cf0" stroke-width="2"/><circle cx="25" cy="25" r="21" fill="none" stroke="#222" stroke-width="1.300"/><path d="M21 21h8l1 5-2 6h-4l-2-6z" fill="#000"/><path d="M23 22c-2-3-8-2-9-9M17 18v-5M20 20v-5M27 22c2-3 8-2 9-9M33 18v-5M30 20v-5" fill="none" stroke="#000" stroke-width="1.600"/><text x="25" y="41" text-anchor="middle" font-family="Noto Sans CJK SC" font-weight="bold" font-size="6">什么名</text></svg>
<script src="main.js"></script>
</body>
</html>
```
FILE: styles.css
```css
* { box-sizing: border-box; }
html, body { height: 100%; }
body { margin: 0; display: flex; flex-direction: column; position: relative; overflow: hidden; background: #3d3d3d; color: #cfcfcf; font: 12px/16px Lato, "Noto Sans CJK SC", sans-serif; }
button, input, select { font: inherit; color: inherit; background: none; border: 0; padding: 0; margin: 0; border-radius: 0; min-width: 0; }
svg { display: block; flex: none; }
i { display: block; }
.paints { position: absolute; width: 0; height: 0; }
.sprite { display: none; }
.zh { font-size: 11px; }
.lat { font-size: 12px; }
.t12 { font-size: 12px; }
.y { color: #d8da86; }
.i16 { width: 16px; height: 16px; }
.i14 { width: 14px; height: 14px; }
.i11 { width: 11px; height: 11px; }
.i26 { width: 26px; height: 14px; }
.dim { color: #8a8a8a; }
.faint { opacity: .35; }
.flip { transform: scaleX(-1); }
.on { background: #84a1d0; }

.titlebar { display: flex; align-items: center; height: 22px; background: #fff; color: #000; padding-left: 2px; flex: none; }
.title { font-size: 13px; margin-left: 5px; }
.winbtns { margin-left: auto; display: flex; padding-right: 3px; }
.winbtns button { width: 45px; height: 20px; display: grid; place-items: center; }

.menubar { display: flex; height: 22px; flex: none; font-size: 11px; padding-left: 1px; }
.menubar > button { padding: 0 7px 1px; height: 22px; }
.menubar .open { background: #989898; color: #e2e39a; }
.menubar .lat { font-size: 12px; }
.layouts { margin-left: auto; display: flex; align-items: center; gap: 12px; padding: 0 2px 1px 0; }
.layouts .gapl { margin: 0 -6px 0 16px; }
.layouts .i16 { margin-left: -6px; }
.sel { position: relative; display: flex; align-items: center; height: 17px; background: #575757; border-radius: 3px; font-size: 11px; }
.sel select { appearance: none; width: 100%; height: 17px; padding: 0 18px 0 7px; outline: 0; opacity: 1; }
.sel svg { position: absolute; right: 4px; top: 6px; width: 8px; height: 6px; color: #e0e0e0; pointer-events: none; }
.w113 { width: 113px; }
.w128 { width: 128px; }
.w78 { width: 78px; }
.w75 { width: 75px; }
.w76 { width: 76px; }

.app { flex: 1; display: flex; min-height: 0; }
.left { flex: 1; min-width: 0; display: flex; flex-direction: column; }
.right { width: 516px; flex: none; display: flex; flex-direction: column; padding-top: 5px; gap: 3px; }

.toolbar { display: flex; height: 44px; padding: 6px 0 0 1px; flex: none; }
.vgrip { width: 4px; height: 32px; margin-right: 4px; background: radial-gradient(circle, #777 1px, transparent 1px) 0 0 / 3px 3px; }
.vgrip.small { height: 19px; margin: 0 4px 0 2px; }
.hgrip { height: 4px; margin: 1px 4px 4px; background: radial-gradient(circle, #777 1px, transparent 1px) 0 0 / 3px 3px; }
.grp { display: flex; gap: 1px; border-radius: 3px; overflow: hidden; height: 34px; }
.grp button, .col button { position: relative; background: #575757; width: 35px; height: 34px; display: grid; place-items: center; }
.grp svg, .col svg { width: 34px; height: 34px; }
.grp .on, .col .on, .pg .on { background: #84a1d0; }
.grp .hot { background: #dcdc8c; }
.g10 { margin-left: 10px; }
.g4 { margin-left: 4px; }
.gbig { margin-left: 227px; }
.ink { color: #1c1c1c; }
.ghost { color: #6a6a6a; }
.more::after { content: ""; position: absolute; right: 1px; bottom: 1px; border: 2px solid #161616; border-left-color: transparent; border-top-color: transparent; }
.axisb b { position: absolute; font: bold 20px/34px "Liberation Sans", sans-serif; color: #151515; }
.psrb span { position: absolute; left: 4px; top: 1px; display: flex; flex-direction: column; }
.psrb b { font: bold 11px/11px "Liberation Sans", sans-serif; color: #f0562c; }

.work { flex: 1; display: flex; min-height: 0; }
.tools { width: 39px; flex: none; padding-left: 1px; }
.col { display: flex; flex-direction: column; gap: 2px; width: 34px; border-radius: 3px; overflow: hidden; }
.col button { width: 34px; }
.c12 { margin-top: 12px; }
.c4 { margin-top: 4px; }
.s1 { color: #7b7b7b; }
.s2 { color: #f28a25; }
.s3 { color: #e6e6e6; }

.center { flex: 1; min-width: 0; display: flex; flex-direction: column; padding-right: 3px; }
.view { flex: 1; min-height: 0; display: flex; flex-direction: column; border: 1px solid #4e4e4e; border-bottom: 0; }
.phead { display: flex; align-items: center; height: 22px; flex: none; font-size: 11px; gap: 14px; padding-left: 6px; padding-bottom: 1px; }
.burger { width: 14px; height: 12px; color: #8a8a8a; margin-right: -4px; }
.burger.lit { color: #dcdcdc; }
.icons { margin-left: auto; display: flex; gap: 4px; color: #8a8a8a; padding-right: 1px; }
.canvas { position: relative; flex: 1; min-height: 0; border: 1px solid #7a7a7a; background: linear-gradient(#525252, #464646 35%, #383838); overflow: hidden; }
#scene { width: 100%; height: 100%; }
#minor { stroke: #535353; }
#major { stroke: #646464; }
.vlabel { position: absolute; left: 1px; top: 2px; padding: 1px 3px; font-size: 11px; color: #e8e8e8; background: #333; border-radius: 2px; }
.vgrid { position: absolute; right: 1px; bottom: 3px; padding: 0 4px; font-size: 11px; color: #e8e8e8; background: #353535; border-radius: 2px; }

.timeline { display: flex; align-items: center; height: 32px; flex: none; }
.timeline .num { margin: 0 0 6px 12px; }
.ruler { position: relative; flex: 1; height: 22px; margin-left: 5px; }
.head { position: absolute; left: -4px; top: 0; width: 9px; height: 16px; background: #84a1d0; }
#ticks { position: absolute; left: 0; top: 0; width: 100%; height: 26px; overflow: visible; }
.nums { position: relative; display: flex; justify-content: space-between; }
.nums span { width: 0; display: flex; justify-content: center; line-height: 12px; }
.nums span:first-child { justify-content: flex-start; padding-left: 5px; margin-right: -5px; color: #7d9ad0; }
.num { position: relative; display: flex; height: 19px; background: #303030; border: 1px solid #4e4e4e; border-radius: 3px 0 0 3px; }
.num input { width: 100%; padding: 0 14px 0 4px; outline: 0; }
.num svg { position: absolute; right: 1px; top: 1px; width: 8px; height: 14px; color: #8a8a8a; }

.transport { display: flex; align-items: center; height: 26px; flex: none; margin-bottom: 4px; }
.transport .num { flex: none; margin-left: -2px; }
.transport .range + .num { margin-left: 7px; }
.range { flex: 1; height: 18px; margin-left: 7px; background: #595959; border-radius: 3px; padding-left: 14px; line-height: 15px; box-shadow: inset 5px 0 #595959, inset 6px 0 #8a8a8a; }
.pg { display: flex; gap: 1px; border-radius: 3px; overflow: hidden; flex: none; }
.pg button { position: relative; width: 27px; height: 26px; background: #575757; display: grid; place-items: center; }
.pg svg { width: 26px; height: 26px; }
.pg .axisb b { font-size: 14px; line-height: 26px; }
.first { margin-left: 11px; }
.p12 { margin-left: 11px; }
.p4 { margin-left: 3px; }

.bottom { display: flex; gap: 3px; height: 132px; flex: none; }
.materials { flex: 1; border: 1px solid #4e4e4e; }
.materials .phead, .panel > .phead { border-bottom: 1px solid #4e4e4e; height: 23px; }
.coords { width: 332px; border: 1px solid #4e4e4e; padding: 0 2px; }
.chead { display: grid; grid-template-columns: 22px 102px 102px 1fr; align-items: center; height: 24px; padding: 0 0 1px 3px; border-bottom: 1px solid #4e4e4e; font-size: 11px; }
.cgrid { display: grid; grid-template-columns: 12px 96px 12px 95px 12px 93px; column-gap: 1px; row-gap: 3px; align-items: center; padding-top: 5px; justify-content: space-between; }
.cgrid .num { height: 19px; }
.cgrid .sel, .apply { margin-top: 3px; width: 93px; }
.apply { height: 17px; background: #575757; border-radius: 3px; font-size: 11px; }
.status { display: flex; align-items: center; gap: 14px; height: 24px; margin: 3px 3px 0 0; padding-left: 4px; border: 1px solid #4e4e4e; flex: none; }

.dock { display: flex; min-height: 0; }
.objects { flex: 451 1 0; }
.attrs { flex: 537 1 0; }
.panel { flex: 1; min-width: 0; display: flex; flex-direction: column; border: 1px solid #4e4e4e; }
.tabs { width: 23px; flex: none; background: #323232; display: flex; flex-direction: column; gap: 1px; margin-top: -1px; }
.tabs button { writing-mode: vertical-rl; text-orientation: sideways; font-size: 11px; color: #8c8c8c; padding: 5px 0; width: 21px; border-radius: 0 3px 3px 0; }
.tabs .act { background: #3d3d3d; color: #cfcfcf; border: 1px solid #4e4e4e; border-left: 0; }
.tree { flex: 1; display: flex; border: 1px solid #4e4e4e; border-width: 1px 1px 1px 0; margin: 1px 2px 0 0; }
.tcol { border-right: 1px solid #4e4e4e; }
.trow { height: 20px; background: #4b4b4b; display: flex; align-items: center; }
.names { width: 151px; }
.names .trow { color: #fdbf3c; margin-right: -1px; }
.names .trow span { margin-left: 4px; white-space: nowrap; }
.branch { width: 9px; height: 11px; margin: -9px 0 0 9px; border: 1px solid #8a8a8a; border-width: 0 0 1px 1px; }
.flags { width: 40px; border-right-width: 2px; }
.flags .trow { padding-left: 2px; }
.tags { flex: 1; border: 0; }
.tags .trow { background: #464646; }

.aname { display: flex; align-items: center; gap: 6px; height: 28px; padding-left: 5px; flex: none; }
.atabs { display: flex; gap: 1px; margin: 0 0 0 2px; height: 18px; border-radius: 3px; overflow: hidden; width: 244px; flex: none; font-size: 11px; }
.atabs button { flex: 1; background: #575757; }
.atabs .on { background: #84a1d0; color: #111; }
.ascroll { flex: 1; min-height: 0; display: flex; overflow: hidden; margin-bottom: 1px; }
.aform { flex: 1; min-width: 0; padding: 0 0 0 2px; overflow: hidden; }
h2 { margin: 0; padding-left: 2px; font-size: 12px; line-height: 18px; font-weight: bold; color: #ececec; }
h2.zh { font-size: 11px; padding-top: 6px; line-height: 18px; height: 26px; }
.prop { display: flex; align-items: center; height: 21px; font-size: 11px; padding-left: 2px; }
.prop label { width: 39px; margin-left: 7px; white-space: nowrap; }
.prop input[type=radio] { appearance: none; width: 14px; height: 14px; border-radius: 7px; border: 2px solid #777; background: radial-gradient(circle, #9a9a9a 4px, #333 5px); }
.prop.off input[type=radio] { border-color: #3d3d3d; border-width: 3px; background: #4c4c4c; }
.prop.off { color: #737373; }
.prop.off .num { background: #3a3a3a; border-color: #484848; }
.prop.off .sel { background: #4a4a4a; }
.prop.off svg { color: #666; }
.prop .num input { font-size: 12px; }
.prop + h2 { line-height: 20px; padding: 3px 0 4px 2px; border-bottom: 1px solid #4e4e4e; margin-right: 2px; }
.row { display: flex; align-items: center; border-bottom: 1px solid #4e4e4e; padding-left: 24px; margin-right: 2px; }
.flat { border: 1px solid #4e4e4e; height: 19px; padding: 0 3px; flex: 1; outline: 0; }
.flat.tall { height: 26px; }
.deep { background: #303030; border: 1px solid #4e4e4e; border-radius: 4px; height: 19px; padding: 0 6px; flex: 1; outline: 0; }
.info { height: 34px; padding-top: 6px; align-items: center; }
.info label { width: 48px; }
.info label:nth-of-type(2) { width: 36px; margin-left: 24px; }
.base { height: 26px; line-height: 28px; }
.l62 { width: 60px; }
.l88 { width: 87px; white-space: nowrap; }
.r28 { height: 28px; }
.r34 { height: 34px; }
.r29 { height: 29px; }
.r27 { height: 27px; }
.pick { margin: 0 1px 0 2px; width: 18px; height: 18px; }
.r34 .pick { align-self: flex-start; margin-top: 4px; }
.pick svg { width: 18px; height: 18px; }
.slid { width: 76px; flex: none; }
.track { flex: 1; height: 19px; background: linear-gradient(#5c7196, #5c7196) 50% 100% / 1px 4px no-repeat #303030; border: 1px solid #4e4e4e; border-left: 2px solid #84a1d0; border-radius: 0 4px 4px 0; }
.link { flex: 1; display: flex; }
.link .deep { height: 17px; border-radius: 4px 0 0 4px; }
.link button { width: 12px; height: 17px; background: #575757; border-radius: 0 3px 3px 0; display: grid; place-items: center; margin-left: 1px; }
.link button svg { width: 8px; height: 6px; }
.lay { height: 26px; line-height: 28px; }
.lr { height: 27px; padding-left: 25px; }
.lr label { width: 71px; white-space: nowrap; }
.lr input { appearance: none; width: 13px; height: 13px; border: 1px solid #a0a0a0; border-radius: 2px; }
.sbar { width: 16px; flex: none; display: flex; flex-direction: column; align-items: center; color: #8a8a8a; padding: 6px 0 4px; gap: 3px; }
.sbar svg { width: 8px; height: 6px; }
.sbar .up { transform: rotate(180deg); }
.sbar i { width: 4px; flex: 1; margin-bottom: 32px; background: #555; border-radius: 2px; }

.menu { position: absolute; background: #3d3d3d; border: 1px solid #555; border-radius: 3px; padding: 9px 5px 2px 2px; z-index: 2; }
.m1 { left: 575px; top: 44px; width: 248px; }
.m2 { left: 817px; top: 146px; width: 239px; z-index: 3; padding-left: 1px; }
.m3 { left: 1050px; top: 248px; width: 97px; z-index: 4; padding: 9px 1px 1px; }
.dots { position: absolute; left: 6px; right: 5px; top: 2px; height: 6px; background: radial-gradient(circle, #808080 1px, transparent 1px) 0 0 / 3px 3px; }
.menu hr { height: 1px; border: 0; background: #505050; margin: 3px 0; width: 238px; max-width: 100%; }
.mi { display: flex; align-items: center; height: 22px; gap: 5px; white-space: nowrap; position: relative; }
.mi > span:nth-child(2) { line-height: 20px; padding-bottom: 2px; }
.ic { position: relative; width: 21px; height: 22px; flex: none; background: #575757; display: grid; place-items: center; }
.ic svg { width: 18px; height: 18px; }
.ic b { position: absolute; font: bold 9px/12px "Liberation Sans", sans-serif; color: #12202f; }
.ae b { color: #7d4a3e; }
.solo b { font-size: 14px; color: #fff; }
.mi kbd { font: inherit; margin-left: auto; width: 52px; margin-right: 20px; padding-bottom: 2px; }
.ar { width: 4px; height: 8px; margin: 2px 8px 0 auto; }
.m2 .ar { margin-right: 3px; }
.gr { width: 12px; height: 12px; margin-left: auto; margin-right: 1px; }
.sel-on { background: #989898; color: #111; }
.sel-on .ic { background: none; }
.dis { color: #7a7a7a; }
.dis .ic svg { opacity: .8; }
.frame { position: absolute; z-index: 5; left: 829px; top: 248px; width: 354px; height: 48px; border: 2px solid #ee1c24; }
.pointer { position: absolute; z-index: 5; left: 1139px; top: 327px; width: 90px; height: 70px; }
.badge { position: absolute; z-index: 5; right: 40px; top: 468px; width: 50px; height: 50px; }
```
FILE: main.js
```js
var NS = 'http://www.w3.org/2000/svg';

function line(parent, attrs) {
  var el = document.createElementNS(NS, 'line');
  for (var k in attrs) el.setAttribute(k, attrs[k]);
  parent.appendChild(el);
}

/* Floor grid in two-point perspective: origin, both vanishing points, cell scale. */
var O = [719, 465], VX = [-612, 21], VZ = [2051, 21], K = 0.074;

function project(x, z) {
  var w = 1 - K * x + K * z;
  return [(O[0] - K * x * VX[0] + K * z * VZ[0]) / w,
          (O[1] - K * x * VX[1] + K * z * VZ[1]) / w];
}

function gridLine(vp, p, n) {
  var t = 4000 / Math.hypot(p[0] - vp[0], p[1] - vp[1]);
  var major = n % 10 === 0;
  line(document.getElementById(major ? 'major' : 'minor'), {
    x1: vp[0], y1: vp[1],
    x2: vp[0] + (p[0] - vp[0]) * t, y2: vp[1] + (p[1] - vp[1]) * t,
    opacity: major ? 1 : Math.max(0.2, 1 - n / 45)
  });
}

for (var n = -8; n <= 60; n++) {
  gridLine(VZ, project(-n, Math.max(0, -n)), Math.abs(n));
  gridLine(VX, project(Math.min(0, n), n), Math.abs(n));
}

/* Timeline ruler: 90 frames, labels every 5. */
var ticks = document.getElementById('ticks'), nums = document.getElementById('nums');
line(ticks, { x1: -4, x2: '100.5%', y1: 16.5, y2: 16.5, stroke: '#8a8a8a' });
for (var f = 0; f <= 90; f++) {
  var x = (f / 90 * 100) + '%';
  var long = f % 30 === 0 && f > 0;
  line(ticks, { x1: x, x2: x, y1: long ? 1 : 19, y2: f % 5 ? 21 : 22, stroke: long ? '#8a8a8a' : '#c0c0c0' });
  if (f % 5 === 0) {
    var s = document.createElement('span');
    s.textContent = f;
    nums.appendChild(s);
  }
}
```
